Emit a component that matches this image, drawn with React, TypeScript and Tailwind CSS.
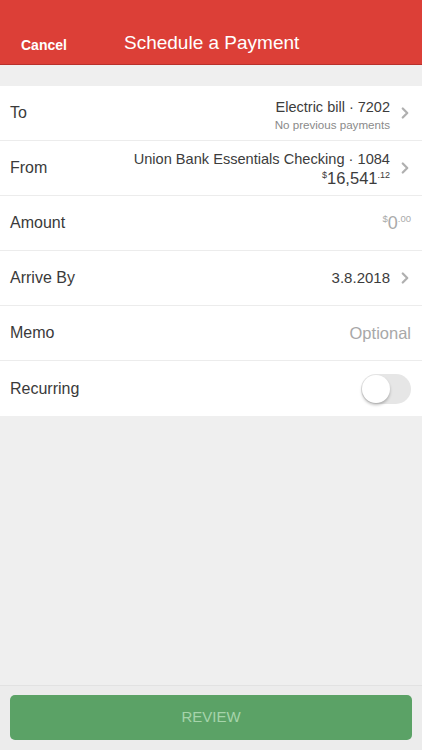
import { ChevronRight } from 'lucide-react'

function Chevron() {
  return <ChevronRight className="h-[18px] w-[18px] text-[#b0b0b0] shrink-0 ml-[6px] -mr-[3px]" strokeWidth={3} />
}

function Row({ label, children }: { label: string; children?: React.ReactNode }) {
  return (
    <div className="flex h-[55px] items-center justify-between border-b border-[#ececec] pl-[10px] pr-[11px] last:border-b-0">
      <span className="text-[16px] text-[#3a3a3a]">{label}</span>
      <div className="flex items-center">{children}</div>
    </div>
  )
}

export default function App() {
  return (
    <div
      className="flex h-[750px] w-[422px] flex-col bg-[#efefef]"
      style={{ fontFamily: '"Liberation Sans", Arial, sans-serif' }}
    >
      {/* Header */}
      <div className="flex h-[65px] items-end border-b border-[#b8302b] bg-[#dc3f37] pb-[7px]">
        <span className="ml-[21px] mb-[1px] w-[103px] text-[14px] font-bold text-white">Cancel</span>
        <span className="text-[19px] text-white">Schedule a Payment</span>
      </div>

      <div className="h-[21px]" />

      {/* Form rows */}
      <div className="bg-white">
        <Row label="To">
          <div className="flex flex-col items-end pt-[3px]">
            <span className="text-[14.5px] leading-[20px] text-[#3c3c3c]">Electric bill · 7202</span>
            <span className="text-[11.6px] leading-[16px] text-[#8a8a8a]">No previous payments</span>
          </div>
          <Chevron />
        </Row>
        <Row label="From">
          <div className="flex flex-col items-end">
            <span className="text-[14.6px] leading-[20px] text-[#3c3c3c]">Union Bank Essentials Checking · 1084</span>
            <span className="flex items-start text-[#3c3c3c]">
              <span className="text-[9px] leading-[12px]">$</span>
              <span className="text-[16.5px] leading-[19px]">16,541</span>
              <span className="text-[9px] leading-[12px]">.12</span>
            </span>
          </div>
          <Chevron />
        </Row>
        <Row label="Amount">
          <span className="flex items-start text-[#aaa]">
            <span className="text-[9.5px] leading-[12px]">$</span>
            <span className="text-[18px] leading-[20px]">0</span>
            <span className="text-[9.5px] leading-[12px]">.00</span>
          </span>
        </Row>
        <Row label="Arrive By">
          <span className="text-[15px] text-[#3c3c3c]">3.8.2018</span>
          <Chevron />
        </Row>
        <Row label="Memo">
          <span className="text-[16.5px] text-[#a8a8a8]">Optional</span>
        </Row>
        <Row label="Recurring">
          <div className="relative h-[30px] w-[50px] rounded-full bg-[#e6e6e6]">
            <div className="absolute left-[1px] top-[1px] h-[28px] w-[28px] rounded-full bg-white shadow-[0_2px_3px_rgba(0,0,0,0.25)]" />
          </div>
        </Row>
      </div>

      <div className="flex-1" />

      {/* Bottom bar */}
      <div className="border-t border-[#e2e2e2] bg-[#ececec] px-[10px] pb-[10px] pt-[9px]">
        <button className="flex h-[45px] w-full items-center justify-center rounded-[5px] bg-[#5ba266] text-[15px] text-[#a6d4ab]">
          REVIEW
        </button>
      </div>
    </div>
  )
}
